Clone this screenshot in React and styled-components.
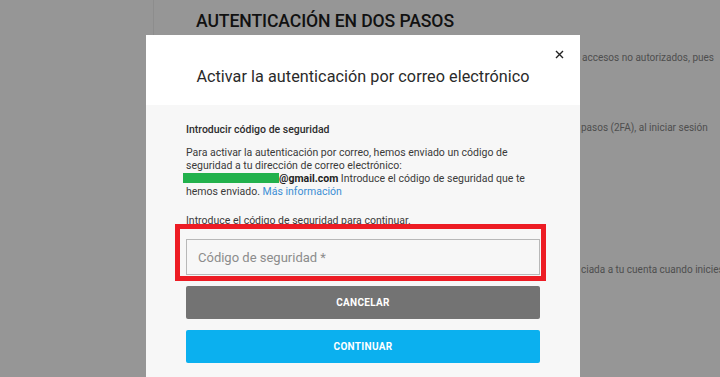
import React from "react";
import styled, { createGlobalStyle } from "styled-components";

const GlobalStyle = createGlobalStyle`
  html, body { margin: 0; padding: 0; }
  body {
    width: 720px;
    height: 377px;
    overflow: hidden;
    font-family: Roboto, "Liberation Sans", Arial, sans-serif;
  }
  * { box-sizing: border-box; }
`;

const Page = styled.div`
  position: relative;
  width: 720px;
  height: 377px;
  overflow: hidden;
  display: flex;
  background: #969696;
`;

const Sidebar = styled.div`
  flex: 0 0 154px;
  border-right: 1px solid #8d8d8d;
`;

const Main = styled.main`
  flex: 1;
  padding: 11px 0 0 42px;
  min-width: 0;
  overflow: hidden;
`;

const Heading = styled.h1`
  margin: 0;
  font-size: 17.6px;
  line-height: 20px;
  font-weight: 500;
  color: #111;
  letter-spacing: -0.1px;
  white-space: nowrap;
`;

const BgLine = styled.p`
  margin: ${(p) => p.$top}px 0 0;
  font-size: 10px;
  line-height: 14px;
  color: #4e4e4e;
  white-space: nowrap;
`;

const Hidden = styled.span`
  display: inline-block;
  width: ${(p) => p.$w}px;
  overflow: hidden;
  vertical-align: bottom;
`;

const Modal = styled.section`
  position: absolute;
  left: 146px;
  top: 35px;
  width: 434px;
  bottom: 0;
  background: #f7f7f7;
  display: flex;
  flex-direction: column;
`;

const Header = styled.header`
  position: relative;
  height: 70px;
  background: #fff;
  display: flex;
  align-items: center;
  justify-content: center;
  padding-top: 12px;
`;

const Title = styled.h2`
  margin: 0;
  font-size: 16.2px;
  font-weight: 400;
  color: #2a2a2a;
  letter-spacing: 0.05px;
`;

const Close = styled.button`
  position: absolute;
  top: 12px;
  right: 14px;
  width: 14px;
  height: 14px;
  padding: 0;
  border: 0;
  background: none;
  display: flex;
  align-items: center;
  justify-content: center;
`;

const Body = styled.div`
  padding: 18px 40px 0;
  display: flex;
  flex-direction: column;
  color: #3a3a3a;
  font-size: 10.5px;
  line-height: 13px;
`;

const SectionTitle = styled.h3`
  margin: 0 0 10px;
  font-size: 10.5px;
  line-height: 13px;
  font-weight: 500;
  color: #2e2e2e;
`;

const Text = styled.p`
  margin: 0 0 ${(p) => p.$after}px;
`;

const Redact = styled.span`
  display: inline-block;
  width: 96px;
  height: 10px;
  margin-left: -3px;
  background: #22b14c;
  vertical-align: -1px;
`;

const Bold = styled.strong`
  font-weight: 700;
  color: #1e1e1e;
`;

const Link = styled.a`
  color: #3b8ed4;
  text-decoration: none;
`;

const Field = styled.div`
  position: relative;
  height: 36px;
  margin-bottom: 11px;
`;

const Input = styled.input`
  width: 100%;
  height: 100%;
  border: 1px solid #b8b8b8;
  background: #f7f7f7;
  padding: 0 11px;
  font-family: inherit;
  font-size: 13px;
  color: #333;
  outline: none;
  &::placeholder { color: #8c8c8c; }
`;

const Annotation = styled.div`
  position: absolute;
  left: -11px;
  top: -15px;
  right: -6px;
  bottom: -6px;
  border: 5px solid #ed1c24;
  pointer-events: none;
`;

const Button = styled.button`
  height: 33px;
  margin-bottom: 11px;
  border: 0;
  border-radius: 2px;
  background: ${(p) => (p.$primary ? "#0bb0ef" : "#737373")};
  color: #fff;
  font-family: inherit;
  font-size: 10px;
  font-weight: 700;
  letter-spacing: 0.3px;
`;

export default function App() {
  return (
    <>
      <GlobalStyle />
      <Page>
        <Sidebar />
        <Main>
          <Heading>AUTENTICACIÓN EN DOS PASOS</Heading>
          <BgLine $top={20}>
            <Hidden $w={386}>La autenticación en dos pasos protege tu cuenta de</Hidden>
            accesos no autorizados, pues
          </BgLine>
          <BgLine $top={56}>
            <Hidden $w={385}>Se te pedirá un código además de tu contraseña si activas la autenticación en dos</Hidden>
            pasos (2FA), al iniciar sesión
          </BgLine>
          <BgLine $top={128}>
            <Hidden $w={385}>Recibirás un código de seguridad en la dirección de correo electrónico aso</Hidden>
            ciada a tu cuenta cuando inicies sesión
          </BgLine>
        </Main>
        <Modal>
          <Header>
            <Title>Activar la autenticación por correo electrónico</Title>
            <Close aria-label="Cerrar">
              <svg width="9" height="9" viewBox="0 0 9 9">
                <path d="M1 1L8 8M8 1L1 8" stroke="#222" strokeWidth="1.4" />
              </svg>
            </Close>
          </Header>
          <Body>
            <SectionTitle>Introducir código de seguridad</SectionTitle>
            <Text $after={16}>
              Para activar la autenticación por correo, hemos enviado un código de
              seguridad a tu dirección de correo electrónico:
              <br />
              <Redact />
              <Bold>@gmail.com</Bold> Introduce el código de seguridad que te
              hemos enviado. <Link href="#">Más información</Link>
            </Text>
            <Text $after={12}>Introduce el código de seguridad para continuar.</Text>
            <Field>
              <Input placeholder="Código de seguridad *" />
              <Annotation />
            </Field>
            <Button>CANCELAR</Button>
            <Button $primary>CONTINUAR</Button>
          </Body>
        </Modal>
      </Page>
    </>
  );
}
